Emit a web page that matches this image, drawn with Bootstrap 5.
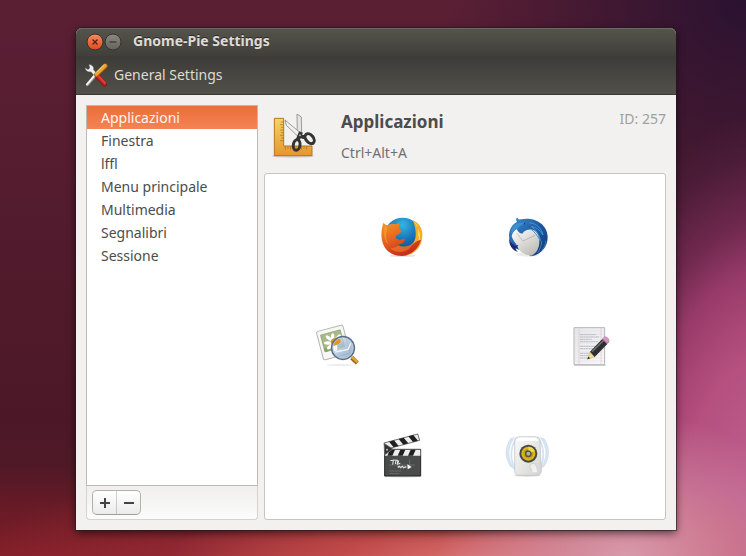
<!DOCTYPE html>
<html lang="en">
<head>
<meta charset="utf-8">
<meta name="viewport" content="width=device-width, initial-scale=1">
<title>Gnome-Pie Settings</title>
<link href="https://cdn.jsdelivr.net/npm/bootstrap@5.3.0/dist/css/bootstrap.min.css" rel="stylesheet">
<style>
body {
  font-family: "Noto Sans", "Open Sans", sans-serif;
  font-size: 14px;
  line-height: 23px;
  color: #4c4c4c;
  padding: 28px 70px 26px 76px;
  background:
    radial-gradient(ellipse 190px 150px at 84% 101%, rgba(218,160,178,.95), rgba(214,146,168,.6) 50%, transparent),
    radial-gradient(ellipse 330px 120px at 66% 104%, rgba(226,128,128,1), rgba(200,80,76,.75) 50%, transparent),
    radial-gradient(ellipse 230px 400px at 104% 92%, #c26493, #b5507f 40%, #a84675 50%, #963a68 61%, rgba(115,42,82,.9) 73%, rgba(85,32,64,.5) 89%, transparent),
    radial-gradient(ellipse 480px 130px at 55% 106%, rgba(205,75,75,1), rgba(170,50,60,.6) 50%, transparent),
    radial-gradient(ellipse 420px 110px at 5% 103%, rgba(140,30,38,.9), transparent),
    radial-gradient(ellipse 300px 300px at 100% 0, #2a1230, transparent),
    linear-gradient(#5b1f34, #4c1828 75%, #551a26);
}
.app-window { background: #f2f1f0; border-radius: 6px 6px 0 0; box-shadow: 0 0 0 1px rgba(40,25,28,.6), 0 3px 9px rgba(0,0,0,.6); }
.title-bar { height: 28px; padding: 0 10px 1px; background: linear-gradient(#55544c, #403f3a); box-shadow: inset 0 1px #6a6962; border-radius: 6px 6px 0 0; }
.title-bar h1 { font-size: 14px; line-height: 26px; color: #dfdbd2; margin-left: 11px; padding-bottom: 2px; text-shadow: 0 -1px #2b2a27; }
.win-btn { width: 18px; height: 18px; }
.tool-bar { height: 39px; padding: 0 8px 1px; background: linear-gradient(#3c3b37, #525049); border-bottom: 1px solid #3a3935; }
.tool-btn { color: #dfdbd2; font-size: 14px; gap: 6px; }
.tool-btn:hover { color: #fff; }
.tool-btn svg { width: 24px; height: 24px; }
.app-body { padding: 10px; gap: 6px; }
.side { width: 172px; }
.pie-list { background: #fff; border: 1px solid #bcb9b6; }
.pie-list .list-group-item { padding: 0 14px; color: #4c4c4c; background: none; line-height: 23px; }
.pie-list .list-group-item.active { color: #fff4ec; background: linear-gradient(#e96e3c, #f58353); }
.side-tools { padding: 4px 5px; border: 1px solid #d5d3d1; border-top: 0; border-radius: 0 0 4px 4px; background: linear-gradient(#f0efee, #fcfcfc); }
.pair { border: 1px solid #b3b1ae; border-bottom-color: #9f9d9a; border-radius: 5px; background: linear-gradient(#fff, #ececec); }
.pair .btn { width: 23px; height: 23px; }
.pair .btn + .btn { border-left: 1px solid #cfcdcb; }
.pie-head { height: 68px; padding-left: 6px; }
.pie-icon { width: 48px; height: 48px; margin-top: 5px; }
.pie-info { margin-left: 23px; padding-top: 4px; }
.pie-info h2 { font-size: 17px; line-height: 25px; color: #4c4c4c; margin-bottom: 7px; }
.hotkey { color: #707070; line-height: 23px; }
.pie-id { color: #a19f9d; padding-top: 2px; }
.pie-canvas { background: #fff; border: 1px solid #c6c3c0; border-radius: 3px; }
.slice { position: absolute; left: calc(50% + var(--dx)); top: calc(50% + var(--dy)); transform: translate(-50%, -50%); line-height: 0; }
.slice svg { width: 48px; height: 48px; }
.west { --dx: -128px; --dy: 0px; } .east { --dx: 128px; --dy: 0px; }
.nw { --dx: -63px; --dy: -109px; } .ne { --dx: 63px; --dy: -109px; }
.sw { --dx: -63px; --dy: 108px; } .se { --dx: 63px; --dy: 108px; }
</style>
<script src="https://cdn.jsdelivr.net/npm/bootstrap@5.3.0/dist/js/bootstrap.bundle.min.js"></script>
</head>
<body class="min-vh-100 d-flex">
<main class="app-window flex-grow-1 d-flex flex-column">
  <header class="title-bar d-flex align-items-center">
    <button type="button" class="btn p-0 border-0 d-flex" aria-label="Close">
      <svg class="win-btn" viewBox="0 0 18 18"><defs><linearGradient id="cl" x2="0" y2="1"><stop stop-color="#f68a61"/><stop offset="1" stop-color="#dd4c1c"/></linearGradient></defs><circle cx="9" cy="9" r="8" fill="url(#cl)" stroke="#35332f"/><path d="M6.500 6.500l5 5m0-5l-5 5" stroke="#55200e" stroke-width="1.300"/></svg>
    </button>
    <button type="button" class="btn p-0 border-0 d-flex" aria-label="Minimize">
      <svg class="win-btn" viewBox="0 0 18 18"><defs><linearGradient id="mi" x2="0" y2="1"><stop stop-color="#8b8981"/><stop offset="1" stop-color="#64625b"/></linearGradient></defs><circle cx="9" cy="9" r="8" fill="url(#mi)" stroke="#35332f"/><path d="M5.500 9h7" stroke="#36352f" stroke-width="1.200"/></svg>
    </button>
    <h1 class="mb-0 fw-bold">Gnome-Pie Settings</h1>
  </header>
  <div class="tool-bar d-flex align-items-center">
    <button type="button" class="tool-btn btn p-0 border-0 d-flex align-items-center">
      <svg viewBox="42 129 72 72"><path d="M52 194L80 162" stroke="#8d8d8a" stroke-width="9" stroke-linecap="round"/><path d="M51 193L79 160" stroke="#f3f3f1" stroke-width="6" stroke-linecap="round"/><path d="M57 134c10 0 15 7 13 15l9 10-7 6-9-10c-9 2-16-3-17-11l8 5 6-5z" fill="#eee" stroke="#aaa"/><path d="M82 169L104 192" stroke="#8e1114" stroke-width="14" stroke-linecap="round"/><path d="M83 168L104 190" stroke="#d32d2a" stroke-width="10" stroke-linecap="round"/><path d="M86 168L106 189" stroke="#f06a5f" stroke-width="2"/><path d="M106 138L79 164" stroke="#a85f0c" stroke-width="14" stroke-linecap="round"/><path d="M105 137L79 162" stroke="#eda333" stroke-width="11" stroke-linecap="round"/><path d="M102 136L80 157" stroke="#f9cf6c" stroke-width="3"/></svg>
      <span>General Settings</span>
    </button>
  </div>
  <div class="app-body flex-grow-1 d-flex">
    <aside class="side d-flex flex-column flex-shrink-0">
      <nav class="pie-list list-group list-group-flush rounded-0 flex-grow-1" aria-label="Pies">
        <a href="#" class="list-group-item border-0 active" aria-current="true">Applicazioni</a>
        <a href="#" class="list-group-item border-0">Finestra</a>
        <a href="#" class="list-group-item border-0">lffl</a>
        <a href="#" class="list-group-item border-0">Menu principale</a>
        <a href="#" class="list-group-item border-0">Multimedia</a>
        <a href="#" class="list-group-item border-0">Segnalibri</a>
        <a href="#" class="list-group-item border-0">Sessione</a>
      </nav>
      <div class="side-tools d-flex">
        <div class="pair d-flex" role="group" aria-label="Edit list">
          <button type="button" class="btn p-0 border-0 rounded-0 d-flex align-items-center justify-content-center" aria-label="Add"><svg width="10" height="10"><path d="M0 5h10M5 0v10" stroke="#444" stroke-width="2"/></svg></button>
          <span class="vr"></span>
          <button type="button" class="btn p-0 border-0 rounded-0 d-flex align-items-center justify-content-center" aria-label="Remove"><svg width="10" height="10"><path d="M0 5h10" stroke="#444" stroke-width="2"/></svg></button>
        </div>
      </div>
    </aside>
    <section class="flex-grow-1 d-flex flex-column">
      <div class="pie-head d-flex">
        <svg class="pie-icon" viewBox="24 30 144 144" aria-hidden="true"><defs><linearGradient id="ru" x2="0" y2="1"><stop stop-color="#f5d463"/><stop offset="1" stop-color="#e6962c"/></linearGradient></defs>
          <ellipse cx="93" cy="168" rx="63" ry="5" fill="#000" opacity=".15"/>
          <path d="M37 55h28v83h85v29H37z" fill="url(#ru)" stroke="#b8761c" stroke-width="3"/>
          <path d="M64 66h-7m7 8h-10m10 8h-7m7 8h-10m10 8h-7m7 8h-10m10 8h-7m7 8h-10m16 17v10m8-10v7m8-7v10m8-10v7m8-7v10m8-10v7m8-7v10m8-10v7m8-7v10" stroke="#a96a17" stroke-width="2"/>
          <path d="M105 42l13 9 1 51-7 10-6-6z" fill="#e4e4e2" stroke="#8b8b89" stroke-width="2.500"/><path d="M69 60l4 16 34 32 9-3-4-9z" fill="#f0f0ee" stroke="#8b8b89" stroke-width="2.500"/>
          <path d="M117 96l-11 26m2-15l21 5" stroke="#333534" stroke-width="12"/><ellipse cx="104" cy="135" rx="10" ry="16" fill="none" stroke="#333534" stroke-width="9" transform="rotate(8 104 135)"/><ellipse cx="143" cy="116" rx="11" ry="17" fill="none" stroke="#333534" stroke-width="9" transform="rotate(-40 143 116)"/><circle cx="114" cy="106" r="3" fill="#aaa"/></svg>
        <div class="pie-info">
          <h2 class="fw-bold">Applicazioni</h2>
          <div class="hotkey">Ctrl+Alt+A</div>
        </div>
        <div class="pie-id ms-auto">ID: 257</div>
      </div>
      <div class="pie-canvas flex-grow-1 position-relative">
        <button type="button" class="slice nw btn p-0 border-0" aria-label="Firefox"><svg viewBox="24 24 144 144"><defs><radialGradient id="fb" cx=".5" cy=".2" r=".8"><stop stop-color="#35b5e2"/><stop offset=".5" stop-color="#1874b6"/><stop offset="1" stop-color="#173b7b"/></radialGradient><linearGradient id="fo" x2=".5" y2="1"><stop stop-color="#f09a2a"/><stop offset=".45" stop-color="#e9681f"/><stop offset="1" stop-color="#c52d1e"/></linearGradient></defs>
          <ellipse cx="97" cy="149" rx="38" ry="5" fill="#000" opacity=".1"/><circle cx="98" cy="90" r="55" fill="url(#fb)"/>
          <path d="M128 42c24 10 33 33 28 58-5 31-29 49-57 50l-10-22c28 2 48-16 48-42 0-14-1-25-9-44z" fill="#f5ad25"/><path d="M128 42c19 14 20 37 14 55l5-10c1 27-13 46-33 54 37-11 52-56 14-99z" fill="#fcea63"/>
          <path d="M40 50c4 5 9 8 16 8 7-6 13-5 20-3l13-4c-2 7-2 13 0 19l7 5-12 11c-7 3-9 8-3 13 8 5 15 0 24-1 0 11-11 18-23 18 15 11 38 7 50-4 8-7 15-11 21-10-8 27-31 47-58 48-33 0-56-22-60-52-2-18 0-33 5-48z" fill="url(#fo)"/><path d="M85 118c18 8 33 1 45-8-7 17-21 27-39 28-13 0-23-5-31-13 9 2 17 0 25-7z" fill="#f28228" opacity=".6"/><path d="M45 57l8 10c-8 18-5 38 5 51-17-14-20-38-13-61z" fill="#f8a435" opacity=".6"/></svg></button>
        <button type="button" class="slice ne btn p-0 border-0" aria-label="Thunderbird"><svg viewBox="27 24 144 144"><defs><linearGradient id="tb" x1="0" x2="1" y2="1"><stop stop-color="#3d8fd0"/><stop offset=".5" stop-color="#1c5aa2"/><stop offset="1" stop-color="#17336f"/></linearGradient><linearGradient id="en" x2=".7" y2="1"><stop stop-color="#fff"/><stop offset="1" stop-color="#bfbcb5"/></linearGradient></defs>
          <ellipse cx="98" cy="145" rx="36" ry="7" fill="#000" opacity=".08"/><path d="M66 47c-5-6-2-10 1-12 3 5 6 6 12 5 34-7 77 10 79 52 0 32-20 53-50 59l-30-18c-22-4-35-22-36-43 0-20 9-34 24-43z" fill="url(#tb)"/>
          <path d="M50 90c2-9 7-17 15-22 3 9 9 14 17 15 8-12 25-16 38-8 9 7 14 19 13 33-1 20-9 35-24 41-24-3-40-16-46-36-6-7-11-14-13-23z" fill="url(#en)"/><path d="M66 82l18 23 36-17" fill="none" stroke="#a9a7a3" stroke-width="2"/>
          <path d="M57 58c9-9 25-10 40-7-13 2-25 10-30 18-7 2-13 8-18 15-1-11 3-20 8-26z" fill="#3c90cc"/><path d="M103 50c24 3 37 19 41 37-11-17-22-24-35-25 14 10 25 24 27 42-9-16-18-27-29-35" fill="none" stroke="#4598d5" stroke-width="3"/><path d="M140 105c0 13-5 27-13 36m25-37c0 12-5 22-12 29" fill="none" stroke="#377fc0" stroke-width="3"/><path d="M43 95c2 14 10 20 18 24l10-3c-5 4-4 8-2 12l-7-3c1 6 3 10 8 13-18-5-30-22-27-43z" fill="#1e2872"/><circle cx="88" cy="53" r="2" fill="#10244c"/></svg></button>
        <button type="button" class="slice west btn p-0 border-0" aria-label="Image Viewer"><svg viewBox="24 24 144 144"><defs><linearGradient id="le" x2="1" y2="1"><stop stop-color="#d5e5f3"/><stop offset="1" stop-color="#7f9cbd"/></linearGradient></defs>
          <ellipse cx="108" cy="150" rx="45" ry="2" fill="#000" opacity=".1"/><g transform="rotate(-15 86 84)"><rect x="44" y="38" width="82" height="88" rx="5" fill="#f7f7f5" stroke="#b3b3b0" stroke-width="3"/><path d="M54 51h61v52H54z" fill="#a9b988" stroke="#8a9b67" stroke-width="2"/><path d="M54 92h61v11H54z" fill="#8ba368"/></g>
          <circle cx="114" cy="99" r="34" fill="url(#le)" fill-opacity=".8"/>
          <g fill="#fff"><ellipse cx="83" cy="66" rx="5" ry="11"/><ellipse cx="91" cy="98" rx="6" ry="10"/><ellipse cx="69" cy="84" rx="12" ry="5"/><ellipse cx="72" cy="70" rx="12" ry="5" transform="rotate(40 72 70)"/><ellipse cx="99" cy="67" rx="11" ry="5" transform="rotate(-45 99 67)"/><ellipse cx="75" cy="95" rx="11" ry="5" transform="rotate(-40 75 95)"/></g><path d="M78 75c8-8 16-5 24-3 7 2 6 10 0 14l-13 6c-9 0-14-8-11-17z" fill="#e89422"/>
          <path d="M140 128l17 16" stroke="#94620e" stroke-width="13"/><path d="M140 126l18 16" stroke="#dda238" stroke-width="8"/><circle cx="114" cy="99" r="34" fill="none" stroke="#5a6f88" stroke-width="5"/><circle cx="114" cy="99" r="31" fill="none" stroke="#c6d5e3" stroke-width="2"/><path d="M91 111l38-8 8-18" fill="none" stroke="#eff5fa" stroke-width="4"/></svg></button>
        <button type="button" class="slice east btn p-0 border-0" aria-label="Text Editor"><svg viewBox="24 24 144 144"><defs><linearGradient id="pa" x2="1" y2="1"><stop stop-color="#e7e8ec"/><stop offset="1" stop-color="#f8f8f8"/></linearGradient></defs>
          <path d="M39 151h96" stroke="#ccc" stroke-width="3"/><path d="M39 38h92v111H39z" fill="url(#pa)" stroke="#b5b5b8" stroke-width="3"/><path d="M41 48h88m-88 9h88m-88 9h88m-88 9h88m-88 9h88m-88 9h88m-88 9h88m-88 9h88m-88 9h88m-88 9h88m-88 9h88" stroke="#d5d9e3"/><path d="M54 39v109m66-109v109" stroke="#e5b2b8" stroke-width="1.500"/><path d="M57 59h49m-49 7h58M57 73h35M57 80h55M57 94h57m-57 7h40M57 115h33M57 122h26M57 129h23" stroke="#a6a7ab" stroke-width="2" stroke-dasharray="9 1 5 1"/>
          <path d="M79 133l7-21 16 13z" fill="#f1dc8e" stroke="#a68d41" stroke-width="1"/><path d="M79 133l3-8 6 5z" fill="#222"/><path d="M87 110l37-38 15 15-38 39z" fill="#2d2e2f"/><path d="M93 110l36-35" stroke="#747679" stroke-width="4"/><path d="M124 72l5-5 16 14-6 6z" fill="#999"/><path d="M129 67c6-6 18 5 15 13l-6 4-13-13z" fill="#dd92c5" stroke="#a96894" stroke-width="1"/></svg></button>
        <button type="button" class="slice sw btn p-0 border-0" aria-label="Video Editor"><svg viewBox="24 24 144 144"><ellipse cx="98" cy="160" rx="58" ry="4" fill="#000" opacity=".12"/>
          <path d="M44 79h108v80H44z" fill="#4a4b4b" stroke="#242525" stroke-width="3"/><path d="M45 80h106v18H45z" fill="#eee"/><path d="M60 80h15l-8 18H52zm31 0h15l-8 18H83zm31 0h15l-8 18h-15z" fill="#202020"/><path d="M42 60l101-27 6 19-101 27z" fill="#eee" stroke="#292929" stroke-width="2"/><path d="M57 56l15-4 14 17-15 4zm29-8l15-4 14 17-15 4zm29-8l15-4 14 17-15 4z" fill="#202020"/><path d="M42 61l27 17-25 18z" fill="#333" stroke="#777" stroke-width="2"/><circle cx="51" cy="80" r="3" fill="#bbb"/>
          <path d="M61 113q11-3 23-1m-14 0l-2 13m10-12l-2 10m8-11l-3 12 10-3m-5-8l-3 9" fill="none" stroke="#eee" stroke-width="3"/><path d="M58 126h77m-16-17v29M58 144h35m-35 8h30" stroke="#a8a8a8" stroke-width="1"/><path d="M83 133l5-3 4 4 5-4 4 4 8-3" fill="none" stroke="#ddd" stroke-width="4"/><path d="M112 124l13 8-12 7z" fill="#fff"/></svg></button>
        <button type="button" class="slice se btn p-0 border-0" aria-label="Music Player"><svg viewBox="24 24 144 144"><defs><linearGradient id="sp" x2="1" y2="1"><stop stop-color="#fafafa"/><stop offset="1" stop-color="#d3d4d2"/></linearGradient></defs>
          <g fill="none" stroke="#a9c6e6" stroke-width="5" opacity=".5"><path d="M54 43q-34 47 0 95M47 45q-31 43 0 88M62 42q-32 53 0 105M134 43q34 47 0 95m7-93q31 43 0 88m-15-91q32 53 0 105"/></g><ellipse cx="94" cy="157" rx="40" ry="4" fill="#000" opacity=".15"/>
          <path d="M72 41h44q14 0 16 15l4 86q0 15-14 15H68q-12 0-12-15V56q2-15 16-15z" fill="url(#sp)" stroke="#bcbdbb" stroke-width="2"/><path d="M73 44h42q9 0 12 10H62q2-10 11-10z" fill="#fff"/><circle cx="97" cy="92" r="27" fill="#4b4a42"/><circle cx="97" cy="92" r="21" fill="#d9b91f"/><circle cx="97" cy="92" r="15" fill="#c1a01a"/><circle cx="97" cy="92" r="10" fill="#55503a"/><circle cx="97" cy="92" r="6" fill="#b5b09c"/><path d="M97 71a21 21 0 0 1 20 14l-11 3a10 10 0 0 0-9-6z" fill="#ecd84c"/><circle cx="111" cy="131" r="10" fill="#ececeb" stroke="#c4c4c2" stroke-width="2"/><path d="M110 134c-3 7-2 10 1 14h12l-3-19z" fill="#f1f1f0"/></svg></button>
      </div>
    </section>
  </div>
</main>
</body>
</html>
